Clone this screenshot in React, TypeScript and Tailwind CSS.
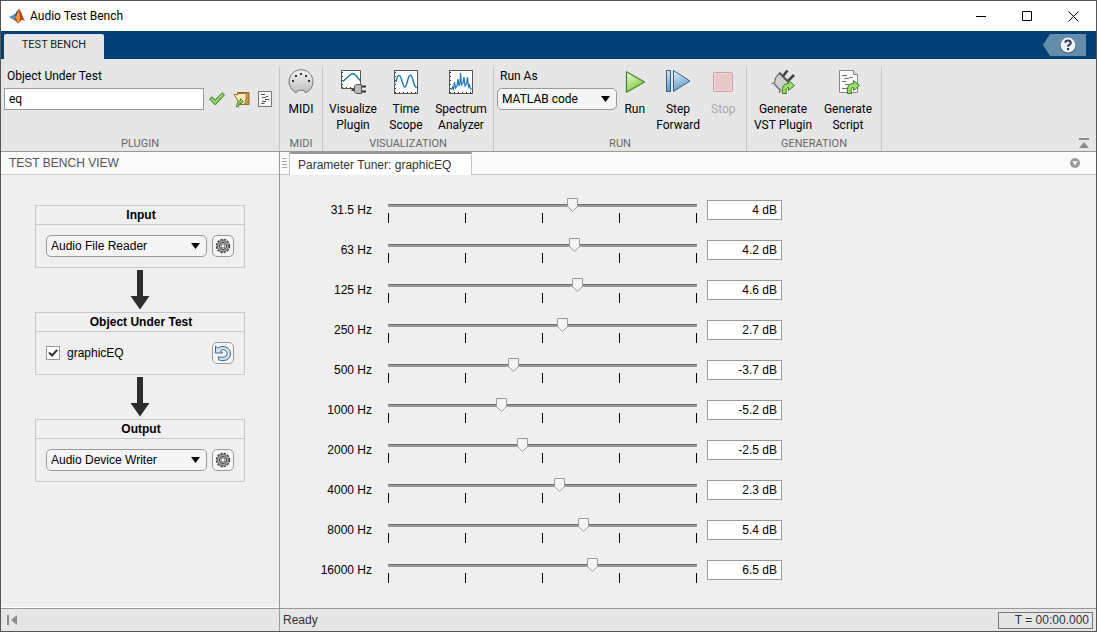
import { FC, ReactNode, useState } from 'react';

interface Band {
    label: string;
    gain: number;
}

const MIN_GAIN = -20;
const MAX_GAIN = 20;
const TRACK_LENGTH = 308;

const bands: Band[] = [
    { label: '31.5 Hz', gain: 4 },
    { label: '63 Hz', gain: 4.2 },
    { label: '125 Hz', gain: 4.6 },
    { label: '250 Hz', gain: 2.7 },
    { label: '500 Hz', gain: -3.7 },
    { label: '1000 Hz', gain: -5.2 },
    { label: '2000 Hz', gain: -2.5 },
    { label: '4000 Hz', gain: 2.3 },
    { label: '8000 Hz', gain: 5.4 },
    { label: '16000 Hz', gain: 6.5 }
];

const uiFont = "font-[Roboto,'Open_Sans',sans-serif]";

// Icons

const MatlabLogo: FC = () => (
    <svg width="16" height="16" viewBox="0 0 16 16" aria-hidden="true">
        <path d="M0 9 5 6.600 7.500 9 4.500 11.800z" fill="#4a92c4" />
        <path d="M5 6.600C7 6 7.800 2.500 10 .8L7.500 9z" fill="#2a4f73" />
        <path d="M4.500 11.800C6.500 10.500 8.500 6 10 .8c2 1.700 3.600 8 6 12.700-2-1.800-3.400-1.800-4.500-.6-1 1.200-1.600 2.200-2.800 2.600C7.800 14 6.300 12.300 4.500 11.800z" fill="#c3401c" />
        <path d="M10 .8C9 4 8 7 6.500 9.500 7.500 11 8.200 13 8.700 15.500c.9-.5 2.100-2.500 2.800-5.500C11.600 6.500 11 3.500 10 .8z" fill="#ee9236" />
        <path d="M10 .8C11.500 5 11.800 10 11.500 12.900c-.4-4-1-8-1.500-12.100z" fill="#7a1f10" />
    </svg>
);

const CheckIcon: FC = () => (
    <svg width="18" height="16" viewBox="0 0 18 16" aria-hidden="true">
        <path d="M1.500 8 4 5.800 7 9 14.200 1.700 16.500 3.800 7.300 14z" fill="#7cc254" stroke="#478a2c" strokeLinejoin="round" />
        <path d="M3.500 7.800 7.200 11.500 14.500 3.500" fill="none" stroke="#b9e49a" />
    </svg>
);

const FolderIcon: FC = () => (
    <svg width="17" height="17" viewBox="0 0 17 17" aria-hidden="true">
        <path d="M4.500 1.500H16v12H8z" fill="#c79a58" stroke="#97651f" />
        <path d="M1 3.500h4l1-1h7.500l-1 9.500-2 1.500H6L4.500 9z" fill="#f9e8bb" stroke="#a97228" strokeLinejoin="round" />
        <path d="M3.500 15.800C3.500 12 5 9.800 7.500 9.500V7.500l3 3-3 3v-2c-1.500.3-2 2-1.700 4.300z" fill="#8ed162" stroke="#3f7a22" strokeWidth=".8" />
    </svg>
);

const ScriptIcon: FC = () => (
    <svg width="15" height="17" viewBox="0 0 15 17" aria-hidden="true">
        <rect x=".5" y=".5" width="13" height="15" fill="#f8f8f8" stroke="#777" />
        <path d="M3 3.500h4M4 6.500h4M8 5.500h2M7 8.500h4.500M4 10.500h4M3 12.500h3.500" stroke="#555" />
    </svg>
);

const MidiIcon: FC = () => (
    <svg width="26" height="26" viewBox="0 0 26 26" aria-hidden="true">
        <defs>
            <linearGradient id="midi" x1="0" y1="0" x2="0" y2="1">
                <stop offset="0" stopColor="#f4f4f4" />
                <stop offset="1" stopColor="#bdbdbd" />
            </linearGradient>
        </defs>
        <path d="M8.500 23.800A12 12 0 1 1 17.500 23.800L16.500 21.800Q13 20.500 9.500 21.800z" fill="url(#midi)" stroke="#777" strokeLinejoin="round" />
        <g fill="#333">
            <rect x="4" y="11" width="2" height="2" />
            <rect x="7" y="6" width="2" height="2" />
            <rect x="12" y="4" width="2" height="2" />
            <rect x="17" y="6" width="2" height="2" />
            <rect x="20" y="11" width="2" height="2" />
        </g>
    </svg>
);

const PlotFrame: FC<{ children: ReactNode }> = ({ children }) => (
    <svg width="26" height="26" viewBox="0 0 26 26" aria-hidden="true">
        <rect x="1.500" y="1.500" width="23" height="23" fill="#fff" stroke="#555" />
        <path d="M2 23.500h22" stroke="#333" strokeDasharray="1 3" />
        <path d="M2.500 3v21" stroke="#333" strokeDasharray="1 3" />
        {children}
    </svg>
);

const VisualizeIcon: FC = () => (
    <svg width="26" height="26" viewBox="0 0 26 26" aria-hidden="true">
        <path d="M1.500 1.500h19v18h-19z" fill="#fff" stroke="#555" />
        <path d="M2 18.500h12" stroke="#333" strokeDasharray="1 3" />
        <path d="M2.500 3v16" stroke="#333" strokeDasharray="1 3" />
        <path d="M3 12.500 10 6Q13 3.500 15.500 6L20 11.500" fill="none" stroke="#1f77b8" strokeWidth="1.400" />
        <path d="M11.500 21h3" stroke="#444" strokeWidth="2" />
        <path d="M14.500 17 16 15.500h5.500v9H16L14.500 23z" fill="#bbb" stroke="#555" />
        <path d="M22 17.500h4M22 22.500h4" stroke="#333" strokeWidth="2" />
    </svg>
);

const TimeScopeIcon: FC = () => (
    <PlotFrame>
        <path d="M3 13C4.500 4.500 7 4.500 9 12S12.500 20.500 14.500 12 18.500 4.500 20.500 13C21.500 17 22.500 19 24 18" fill="none" stroke="#1f77b8" strokeWidth="1.400" />
    </PlotFrame>
);

const SpectrumIcon: FC = () => (
    <PlotFrame>
        <path d="M3.500 21 4.500 18 5.500 20 6.500 13 7.500 19 9 17 10 10 11 17 12 14 12.500 4 13.500 16 15 14 16 8 17 17 18.500 15 19.500 8 20.500 18 21.500 16 22.500 20 24 20" fill="none" stroke="#1f77b8" strokeWidth="1.200" />
    </PlotFrame>
);

const RunIcon: FC = () => (
    <svg width="26" height="26" viewBox="0 0 26 26" aria-hidden="true">
        <defs>
            <linearGradient id="run" x1="0" y1="0" x2=".6" y2="1">
                <stop offset="0" stopColor="#f2fbe2" />
                <stop offset="1" stopColor="#7cc832" />
            </linearGradient>
        </defs>
        <path d="M4.500 2.800v20.500L22.500 13z" fill="url(#run)" stroke="#3f8a2a" strokeWidth="1.300" strokeLinejoin="round" />
    </svg>
);

const StepIcon: FC = () => (
    <svg width="26" height="26" viewBox="0 0 26 26" aria-hidden="true">
        <defs>
            <linearGradient id="step" x1="0" y1="0" x2=".3" y2="1">
                <stop offset="0" stopColor="#e4f1fa" />
                <stop offset="1" stopColor="#5f9dcb" />
            </linearGradient>
        </defs>
        <rect x="1.500" y="1.500" width="4" height="21" fill="url(#step)" stroke="#3c5f86" />
        <path d="M8.500 1.500v21L25 12z" fill="url(#step)" stroke="#3c5f86" strokeLinejoin="round" />
    </svg>
);

const StopIcon: FC = () => (
    <svg width="26" height="26" viewBox="0 0 26 26" aria-hidden="true">
        <rect x="3.500" y="3.500" width="19" height="19" rx="1.500" fill="#e6c8c8" stroke="#cf9f9f" />
        <rect x="4.500" y="4.500" width="17" height="17" fill="none" stroke="#edd6d6" />
    </svg>
);

const GreenArrow: FC = () => (
    <path d="M12.500 24.500C11.500 17.500 14 14.500 18.500 14.500V11.500L24.500 16.500 18.500 21.500V18.500C16 18.500 15.500 20.500 16.500 24.500z" fill="#9bdc6a" stroke="#377a20" strokeLinejoin="round" />
);

const VstIcon: FC = () => (
    <svg width="26" height="26" viewBox="0 0 26 26" aria-hidden="true">
        <path d="M13 7 17.500 1.500M18 12 24 6" stroke="#444" strokeWidth="2.600" />
        <path d="M9 3.500 20.500 15 14 21.500 11 23.500 6 18.500 2 14.500 5 13 5.500 9z" fill="#cfcfcf" />
        <path d="M1.500 14.500 4.500 14 5.500 9 9.500 4 20 14.500M4.500 15 10 21 9.500 24" fill="none" stroke="#666" strokeWidth="1.200" />
        <path d="M9.500 4 20 14.500" stroke="#555" strokeWidth="2" />
        <GreenArrow />
    </svg>
);

const GenerateScriptIcon: FC = () => (
    <svg width="26" height="26" viewBox="0 0 26 26" aria-hidden="true">
        <path d="M4.500 1.500h14l4 4v18h-18z" fill="#fbfbfb" stroke="#888" />
        <path d="M18.500 1.500v4h4" fill="#ddd" stroke="#888" />
        <path d="M7 6.500h5M9 9.500h5M14 8.500h4M7 12.500h4M10 15.500h5M7 19.500h5" stroke="#777" />
        <GreenArrow />
    </svg>
);

const GearIcon: FC = () => (
    <svg width="16" height="16" viewBox="0 0 16 16" aria-hidden="true">
        <circle cx="8" cy="8" r="6.500" fill="none" stroke="#444" strokeWidth="1.400" strokeDasharray="2.300 1.100" />
        <circle cx="8" cy="8" r="5.700" fill="#a8a8a8" stroke="#555" strokeWidth=".8" />
        <circle cx="8" cy="8" r="3.500" fill="#eee" stroke="#333" />
        <circle cx="8" cy="8" r="2" fill="#f5f5f5" stroke="#555" strokeWidth=".8" />
    </svg>
);

const ResetIcon: FC = () => (
    <svg width="18" height="18" viewBox="0 0 18 18" aria-hidden="true">
        <path d="M1.500 2 3.600 4C9 .5 16.500 3.500 16.500 9.500c0 6.500-6.500 8.500-12 6.300V12.800c3.500 1.200 8.500.5 8.500-3.300C13 6 9 4.800 6.500 6.700L8.700 9H1.500z" fill="#cde2f1" stroke="#386791" strokeLinejoin="round" />
    </svg>
);

const FlowArrow: FC = () => (
    <svg className="my-[2px] ml-[95px] block" width="20" height="40" viewBox="0 0 20 40" aria-hidden="true">
        <path d="M7 0h6v26h6.500L10 39.500.5 26H7z" fill="#2d2d2d" />
    </svg>
);

// Ribbon

const RibbonSection: FC<{ title: string; className: string; children: ReactNode }> = ({ title, className, children }) => (
    <section className={`flex shrink-0 flex-col justify-between border-r border-[#c6c6c6] ${className}`}>
        {children}
        <h2 className="text-center text-[11px] leading-[14px] text-[#666]">{title}</h2>
    </section>
);

const ToolButton: FC<{ icon: ReactNode; lines: string[]; className: string; disabled?: boolean }> = ({
    icon,
    lines,
    className,
    disabled
}) => (
    <button
        type="button"
        disabled={disabled}
        className={`flex flex-col items-center whitespace-nowrap pt-[2px] leading-4 disabled:text-[#a8a8a8] ${className}`}
    >
        <span className="mb-1.5">{icon}</span>
        {lines.map((line) => (
            <span key={line}>{line}</span>
        ))}
    </button>
);

const DropDown: FC<{ label: string; options: string[]; className: string }> = ({ label, options, className }) => (
    <div className={`relative ${className}`}>
        <select
            aria-label={label}
            className="h-[22px] w-full appearance-none rounded-[5px] border border-[#999] bg-[#f5f5f5] pl-1 pr-5 outline-none"
        >
            {options.map((option) => (
                <option key={option}>{option}</option>
            ))}
        </select>
        <svg className="pointer-events-none absolute right-[7px] top-2" width="9" height="6" viewBox="0 0 9 6" aria-hidden="true">
            <path d="M0 0h9L4.500 6z" />
        </svg>
    </div>
);

const Ribbon: FC = () => (
    <div className={`flex h-[93px] border-b border-[#999] bg-[#e6e6e6] pt-2 ${uiFont}`}>
        <RibbonSection title="PLUGIN" className="w-[279px]">
            <div className="px-[3px]">
                <label htmlFor="object" className="block px-[3px] pb-1 pt-px leading-4">Object Under Test</label>
                <div className="flex items-center">
                    <input id="object" defaultValue="eq" className="h-[22px] w-[200px] border border-[#999] bg-white px-1 outline-none" />
                    <button type="button" aria-label="Accept" className="ml-1"><CheckIcon /></button>
                    <button type="button" aria-label="Browse" className="ml-[7px]"><FolderIcon /></button>
                    <button type="button" aria-label="Open script" className="ml-2"><ScriptIcon /></button>
                </div>
            </div>
        </RibbonSection>
        <RibbonSection title="MIDI" className="w-[43px]">
            <ToolButton icon={<MidiIcon />} lines={['MIDI']} className="w-full" />
        </RibbonSection>
        <RibbonSection title="VISUALIZATION" className="w-[171px]">
            <div className="flex items-start justify-center gap-2">
                <ToolButton icon={<VisualizeIcon />} lines={['Visualize', 'Plugin']} className="w-[50px]" />
                <ToolButton icon={<TimeScopeIcon />} lines={['Time', 'Scope']} className="w-10" />
                <ToolButton icon={<SpectrumIcon />} lines={['Spectrum', 'Analyzer']} className="w-[54px]" />
            </div>
        </RibbonSection>
        <RibbonSection title="RUN" className="w-[253px]">
            <div className="flex items-start px-[3px]">
                <div className="w-[120px] shrink-0">
                    <div className="px-[3px] pb-1 pt-px leading-4">Run As</div>
                    <DropDown label="Run As" options={['MATLAB code', 'Interpreted']} className="w-full" />
                </div>
                <ToolButton icon={<RunIcon />} lines={['Run']} className="w-9" />
                <ToolButton icon={<StepIcon />} lines={['Step', 'Forward']} className="w-[52px]" />
                <ToolButton icon={<StopIcon />} lines={['Stop']} className="w-10" disabled />
            </div>
        </RibbonSection>
        <RibbonSection title="GENERATION" className="w-[135px]">
            <div className="flex items-start justify-center gap-2">
                <ToolButton icon={<VstIcon />} lines={['Generate', 'VST Plugin']} className="w-[60px]" />
                <ToolButton icon={<GenerateScriptIcon />} lines={['Generate', 'Script']} className="w-[54px]" />
            </div>
        </RibbonSection>
        <button type="button" aria-label="Collapse toolstrip" className="mb-[3px] ml-auto mr-[7px] self-end">
            <svg width="10" height="10" viewBox="0 0 10 10" aria-hidden="true">
                <path d="M0 0h10v2H0zM5 4l5 6H0z" fill="#8c8c8c" />
            </svg>
        </button>
    </div>
);

const Header: FC = () => (
    <header className={uiFont}>
        <div className="flex h-[30px] items-center bg-white pl-2">
            <MatlabLogo />
            <h1 className="ml-[5px]">Audio Test Bench</h1>
            <div className="ml-auto flex">
                <button type="button" aria-label="Minimize" className="flex w-[46px] justify-center">
                    <svg width="11" height="11" viewBox="0 0 11 11"><path d="M0 5.500h10" stroke="#000" /></svg>
                </button>
                <button type="button" aria-label="Maximize" className="flex w-[46px] justify-center">
                    <svg width="11" height="11" viewBox="0 0 11 11"><path d="M.5.5h9v9h-9z" fill="none" stroke="#000" /></svg>
                </button>
                <button type="button" aria-label="Close" className="flex w-[46px] justify-center">
                    <svg width="11" height="11" viewBox="0 0 11 11"><path d="M.5.5l10 10M10.500.5l-10 10" stroke="#000" /></svg>
                </button>
            </div>
        </div>
        <div className="flex h-7 justify-between bg-[#004074] pl-[3px] pr-[10px] pt-[3px]">
            <button type="button" className="w-[100px] rounded-t-[2px] bg-[#e6e6e6] pb-[3px] text-[11px] text-[#222]">TEST BENCH</button>
            <button type="button" aria-label="Help" className="self-start">
                <svg width="43" height="22" viewBox="0 0 43 22" aria-hidden="true">
                    <path d="M0 11 7 0h36v22H7z" fill="#668cac" />
                    <circle cx="25" cy="11.500" r="8" fill="#3d5a78" />
                    <circle cx="25" cy="11" r="7.500" fill="#eef1f5" />
                    <path d="M22.300 8.800C22.300 5.600 27.800 5.700 27.800 8.700 27.800 10.700 25.100 10.600 25.100 12.700" fill="none" stroke="#2b3c58" strokeWidth="2" />
                    <rect x="24" y="14" width="2.200" height="2.200" fill="#2b3c58" />
                </svg>
            </button>
        </div>
    </header>
);

// Left panel

const FlowCard: FC<{ title: string; children: ReactNode }> = ({ title, children }) => (
    <section className="w-[210px] border border-[#c8c8c8]">
        <h3 className="h-[19px] border-b border-[#c8c8c8] pl-0.5 text-center font-bold leading-[18px]">{title}</h3>
        <div className="flex h-[42px] items-center justify-between px-[10px]">{children}</div>
    </section>
);

const SmallButton: FC<{ label: string; children: ReactNode }> = ({ label, children }) => (
    <button
        type="button"
        aria-label={label}
        className="flex size-[22px] items-center justify-center rounded-[5px] border border-[#999] bg-[#f5f5f5]"
    >
        {children}
    </button>
);

const TestBenchView: FC = () => (
    <aside className="flex w-[279px] shrink-0 flex-col border-r border-[#999]">
        <h2 className="h-[23px] border-b border-[#d0d0d0] bg-[#fafafa] pl-2 leading-[22px] text-[#555]">TEST BENCH VIEW</h2>
        <div className="flex-1 border-b border-white pl-[34px] pt-[30px]">
            <FlowCard title="Input">
                <DropDown label="Input" options={['Audio File Reader', 'Audio Device Reader']} className="w-[161px]" />
                <SmallButton label="Input settings"><GearIcon /></SmallButton>
            </FlowCard>
            <FlowArrow />
            <FlowCard title="Object Under Test">
                <label className="relative flex items-center gap-[7px]">
                    <input
                        type="checkbox"
                        defaultChecked
                        className="peer size-[14px] appearance-none border border-[#999] bg-white"
                    />
                    <svg className="pointer-events-none absolute left-0 hidden peer-checked:block" width="14" height="14" viewBox="0 0 14 14" aria-hidden="true">
                        <path d="M3 6.500 6 9.500 11.200 3.800" fill="none" stroke="#333" strokeWidth="2" />
                    </svg>
                    graphicEQ
                </label>
                <SmallButton label="Reset"><ResetIcon /></SmallButton>
            </FlowCard>
            <FlowArrow />
            <FlowCard title="Output">
                <DropDown label="Output" options={['Audio Device Writer', 'Audio File Writer']} className="w-[161px]" />
                <SmallButton label="Output settings"><GearIcon /></SmallButton>
            </FlowCard>
        </div>
    </aside>
);

// Parameter tuner

const BandRow: FC<{ band: Band }> = ({ band }) => {
    const [gain, setGain] = useState(band.gain);
    const offset = Math.floor(((gain - MIN_GAIN) / (MAX_GAIN - MIN_GAIN)) * TRACK_LENGTH);

    return (
        <div className="flex h-10 items-center">
            <span className="w-[92px] text-right">{band.label}</span>
            <div className="relative ml-4 h-6 w-[309px] pt-1.5">
                <div className="h-[3px] border-t border-[#707070] bg-[#999]" />
                <div className="mt-1.5 flex h-[10px] justify-between">
                    {[0, 1, 2, 3, 4].map((tick) => (
                        <i key={tick} className="w-px bg-black" />
                    ))}
                </div>
                <svg
                    className="absolute top-0 -ml-[5px]"
                    style={{ left: offset }}
                    width="11"
                    height="14"
                    viewBox="0 0 11 14"
                    aria-hidden="true"
                >
                    <path d="M.5.5h10v8l-5 4.800-5-4.800z" fill="#f5f5f5" stroke="#999" />
                </svg>
                <input
                    type="range"
                    min={MIN_GAIN}
                    max={MAX_GAIN}
                    step={0.1}
                    value={gain}
                    aria-label={band.label}
                    onChange={(e) => setGain(Number(e.target.value))}
                    className="absolute inset-x-0 top-0 h-3.5 w-full opacity-0"
                />
            </div>
            <input
                readOnly
                value={`${gain} dB`}
                aria-label={`${band.label} gain`}
                className="ml-[10px] h-5 w-[75px] border border-[#999] bg-white px-1 text-right outline-none"
            />
        </div>
    );
};

const ParameterTuner: FC = () => (
    <main className="flex flex-1 flex-col">
        <div className="flex h-[23px] border-b border-[#c4c4c4] bg-[#fafafa]">
            <div className="flex w-[10px] items-center justify-center border-r border-[#c4c4c4]">
                <svg width="5" height="10" viewBox="0 0 5 10" aria-hidden="true">
                    <path d="M0 .5h5M0 3.500h5M0 6.500h5M0 9.500h5" stroke="#aaa" />
                </svg>
            </div>
            <button
                type="button"
                className="h-[23px] w-[182px] border-r border-t-2 border-r-[#c4c4c4] border-t-[#999] bg-white pl-2 text-left text-[#333]"
            >
                Parameter Tuner: graphicEQ
            </button>
            <button type="button" aria-label="Panel menu" className="ml-auto mr-4">
                <svg width="10" height="10" viewBox="0 0 10 10" aria-hidden="true">
                    <circle cx="5" cy="5" r="5" fill="#999" />
                    <path d="M2.300 3.300h5.400L5 7.500z" fill="#fff" />
                </svg>
            </button>
        </div>
        <div className="flex-1 pt-[15px]">
            {bands.map((band) => (
                <BandRow key={band.label} band={band} />
            ))}
        </div>
    </main>
);

const StatusBar: FC = () => (
    <footer className="flex h-[23px] border-t border-[#999] bg-[#e6e6e6]">
        <div className="flex w-[279px] shrink-0 items-center border-r border-[#999] pl-1.5">
            <button type="button" aria-label="Collapse panel">
                <svg width="11" height="10" viewBox="0 0 11 10" aria-hidden="true">
                    <path d="M0 0h2v10H0zM10 0v10L4 5z" fill="#8c8c8c" />
                </svg>
            </button>
        </div>
        <div className="flex flex-1 items-center justify-between px-[3px] text-[#333]">
            <span>Ready</span>
            <span className="w-[95px] border border-[#777] pr-[3px] text-right leading-[15px]">T = 00:00.000</span>
        </div>
    </footer>
);

const App: FC = () => (
    <div className="flex min-h-screen flex-col border border-[#555] bg-[#efefef] font-['Liberation_Sans',Arial,sans-serif] text-[12px] text-black">
        <Header />
        <Ribbon />
        <div className="flex flex-1">
            <TestBenchView />
            <ParameterTuner />
        </div>
        <StatusBar />
    </div>
);

export default App;
